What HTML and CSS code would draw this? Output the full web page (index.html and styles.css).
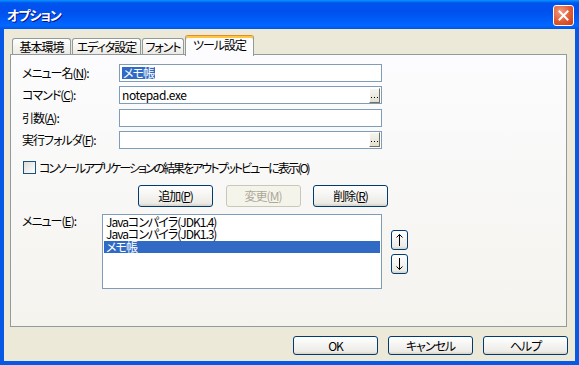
FILE: index.html
```html
<!DOCTYPE html>
<html lang="ja">

<head>
  <meta charset="UTF-8">
  <meta name="viewport" content="width=device-width, initial-scale=1.0">
  <title>オプション</title>
  <link rel="stylesheet" href="styles.css">
</head>

<body>
  <div class="window">
    <div class="title-bar">
      <span class="title-text">オプション</span>
      <button class="close-button" aria-label="閉じる">
        <svg width="11" height="11" viewBox="0 0 11 11">
          <path d="M1.5 1.5 L9.5 9.5 M9.5 1.5 L1.5 9.5" stroke="#fff" stroke-width="2" stroke-linecap="square" />
        </svg>
      </button>
    </div>

    <div class="window-body">
      <!-- タブ -->
      <div class="tabs">
        <div class="tab tab-basic">基本環境</div>
        <div class="tab tab-editor">エディタ設定</div>
        <div class="tab tab-font">フォント</div>
        <div class="tab tab-tool active">ツール設定</div>
      </div>

      <div class="tab-panel">
        <div class="form-grid">
          <span class="field-label">メニュー名(<u>N</u>):</span>
          <div class="text-box"><span class="selected-text">メモ帳</span></div>

          <span class="field-label">コマンド(<u>C</u>):</span>
          <div class="text-box">notepad.exe
            <span class="browse-button">
              <svg width="9" height="13" viewBox="0 0 9 13"><path d="M1 8h1v1H1zM4 8h1v1H4zM7 8h1v1H7z" fill="#000" /></svg>
            </span>
          </div>

          <span class="field-label">引数(<u>A</u>):</span>
          <div class="text-box"></div>

          <span class="field-label">実行フォルダ(<u>F</u>):</span>
          <div class="text-box">
            <span class="browse-button">
              <svg width="9" height="13" viewBox="0 0 9 13"><path d="M1 8h1v1H1zM4 8h1v1H4zM7 8h1v1H7z" fill="#000" /></svg>
            </span>
          </div>
        </div>

        <div class="check-row">
          <span class="check-box"></span>
          <span class="check-text">コンソールアプリケーションの結果をアウトプットビューに表示(O)</span>
        </div>

        <div class="action-buttons">
          <button class="push-button">追加(<u>P</u>)</button>
          <button class="push-button" disabled>変更(<u>M</u>)</button>
          <button class="push-button">削除(<u>R</u>)</button>
        </div>

        <div class="menu-row">
          <span class="menu-label">メニュー(<u>E</u>):</span>
          <ul class="menu-list">
            <li>Javaコンパイラ(JDK1.4)</li>
            <li>Javaコンパイラ(JDK1.3)</li>
            <li class="selected">メモ帳</li>
          </ul>
          <div class="move-buttons">
            <button class="push-button move-button" aria-label="上へ">
              <svg width="9" height="14" viewBox="0 0 9 14"><path d="M4.5 1.5V13M1.5 4.5L4.5 1.5L7.5 4.5" stroke="#000" fill="none" /></svg>
            </button>
            <button class="push-button move-button" aria-label="下へ">
              <svg width="9" height="14" viewBox="0 0 9 14"><path d="M4.5 1V12.5M1.5 9.5L4.5 12.5L7.5 9.5" stroke="#000" fill="none" /></svg>
            </button>
          </div>
        </div>
      </div>

      <div class="dialog-buttons">
        <button class="push-button dialog-button">OK</button>
        <button class="push-button dialog-button">キャンセル</button>
        <button class="push-button dialog-button">ヘルプ</button>
      </div>
    </div>
  </div>
</body>

</html>
```

FILE: styles.css
```css
* {
  box-sizing: border-box;
}

body {
  margin: 0;
  font-family: "Noto Sans CJK JP", "Noto Sans", sans-serif;
  font-size: 12px;
  font-feature-settings: "palt";
  letter-spacing: -1px;
  color: #000;
  background: #fff;
}

u {
  text-decoration-thickness: 1px;
  text-underline-offset: 1px;
}

.window {
  width: 579px;
  height: 365px;
  display: flex;
  flex-direction: column;
}

/* タイトルバー */
.title-bar {
  flex: none;
  height: 29px;
  display: flex;
  justify-content: space-between;
  padding: 0 5px 0 7px;
  background: linear-gradient(180deg, #0997ff, #0053ee 10%, #0050ee 40%, #0066ff 88%, #0060f5 94%, #0055e5);
}

.title-text {
  line-height: 29px;
  font-size: 13px;
  font-weight: bold;
  color: #fff;
  text-shadow: 1px 1px #0f1089;
}

.close-button {
  width: 21px;
  height: 21px;
  margin-top: 5px;
  padding: 0;
  display: flex;
  align-items: center;
  justify-content: center;
  border: 1px solid #fff;
  border-radius: 3px;
  background: radial-gradient(circle at 35% 30%, #f29b80, #e05a32 55%, #c53d18);
}

.window-body {
  flex: 1;
  display: flex;
  flex-direction: column;
  padding: 6px 7px 0 6px;
  background: #ece9d8;
  border: 4px solid #0858e6;
  border-top: 0;
}

/* タブ */
.tabs {
  height: 20px;
  display: flex;
  align-items: flex-end;
  padding-left: 2px;
}

.tab {
  height: 17px;
  margin-left: 1px;
  border: 1px solid #919b9c;
  border-bottom: 0;
  border-radius: 3px 3px 0 0;
  background: linear-gradient(180deg, #fff, #f3f2ee 60%, #e9e8e2);
  text-align: center;
  line-height: 16px;
}

.tab-basic {
  width: 59px;
  margin-left: 0;
}

.tab-editor {
  width: 69px;
}

.tab-font {
  width: 42px;
}

.tab-tool {
  width: 69px;
}

.tab.active {
  position: relative;
  z-index: 1;
  height: 21px;
  margin-bottom: -1px;
  border-top: 1px solid #e68b2c;
  box-shadow: inset 0 2px #ffc83c;
  background: #fcfcfe;
  line-height: 18px;
}

.tab-panel {
  height: 273px;
  margin: -1px 1px 0 0;
  padding: 9px 0 0 11px;
  border: 1px solid #919b9c;
  background: linear-gradient(180deg, #fcfcfe, #f4f3ee);
}

/* 入力欄 */
.form-grid {
  display: grid;
  grid-template-columns: 97px 263px;
  grid-auto-rows: 18px;
  row-gap: 4.33px;
}

.field-label {
  line-height: 18px;
}

.text-box {
  display: flex;
  align-items: center;
  padding: 0 1px 0 2px;
  border: 1px solid #7f9db9;
  background: #fff;
  line-height: 16px;
  letter-spacing: -0.4px;
}

.selected-text {
  display: inline-block;
  height: 12px;
  line-height: 12px;
  padding: 0 1px;
  letter-spacing: -1px;
  background: #316ac5;
  color: #fff;
}

.browse-button {
  width: 11px;
  height: 15px;
  margin-left: auto;
  display: flex;
  border: 1px solid;
  border-color: #fff #716f64 #716f64 #fff;
  background: linear-gradient(180deg, #f6f5ef, #e3e0d0);
}

.check-row {
  height: 13px;
  margin-top: 12px;
  padding-left: 1px;
  display: flex;
  align-items: center;
  gap: 3px;
  line-height: 13px;
}

.check-text {
  letter-spacing: -2px;
}

.check-box {
  width: 13px;
  height: 13px;
  border: 1px solid #1c5180;
  background: linear-gradient(135deg, #dcdcd7, #fff);
}

/* ボタン */
.push-button {
  padding: 0;
  font-family: inherit;
  font-size: 12px;
  font-feature-settings: "palt";
  letter-spacing: -1px;
  color: #000;
  border: 1px solid #003c74;
  border-radius: 3px;
  background: linear-gradient(180deg, #fff, #ecebe6 86%, #d6d0c5);
}

.push-button:disabled {
  color: #aca899;
  border-color: #c9c7ba;
  background: #f5f4ea;
}

.action-buttons {
  margin-top: 11px;
  padding-left: 116px;
  display: flex;
  gap: 12.5px;
}

.action-buttons .push-button {
  width: 75px;
  height: 22px;
}

.menu-row {
  margin-top: 7px;
  display: flex;
  align-items: flex-start;
}

.menu-label {
  width: 80px;
  line-height: 13px;
}

.menu-list {
  width: 280px;
  height: 75px;
  margin: 0;
  padding: 1px;
  list-style: none;
  border: 1px solid #7f9db9;
  background: #fff;
}

.menu-list li {
  height: 12.5px;
  padding-left: 2px;
  line-height: 12.5px;
}

.menu-list li.selected {
  background: #316ac5;
  color: #fff;
}

.move-buttons {
  margin-left: 9px;
  padding-top: 16px;
  display: flex;
  flex-direction: column;
  gap: 4px;
}

.move-button {
  width: 17px;
  height: 20px;
  display: flex;
  align-items: center;
  justify-content: center;
}

.dialog-buttons {
  margin-top: 9px;
  display: flex;
  justify-content: flex-end;
  gap: 10px;
}

.dialog-button {
  width: 85px;
  height: 19px;
  line-height: 16px;
}
```
